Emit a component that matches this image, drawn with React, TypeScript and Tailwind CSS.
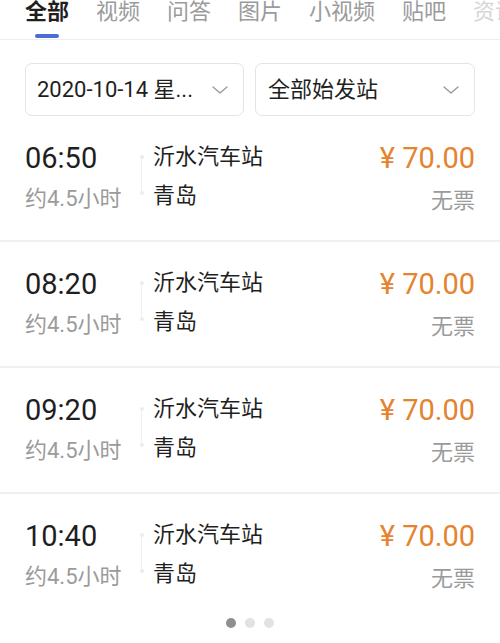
const tabs = ["全部", "视频", "问答", "图片", "小视频", "贴吧", "资讯"];

const trips = [
  { time: "06:50" },
  { time: "08:20" },
  { time: "09:20" },
  { time: "10:40" },
];

function Chevron() {
  return (
    <svg width="16" height="8" viewBox="0 0 16 8" fill="none" className="shrink-0">
      <polyline points="1,1 8,7 15,1" stroke="#9a9a9a" strokeWidth="1.4" strokeLinecap="round" strokeLinejoin="round" />
    </svg>
  );
}

function TripRow({ time, last }: { time: string; last?: boolean }) {
  return (
    <div
      className={`flex px-[25px] ${
        last ? "h-[124px]" : "h-[126px] border-b-2 border-[#f0f0f0]"
      }`}
    >
      <div className="w-[114px] shrink-0 pt-[28px]">
        <div className="text-[29px] leading-[29px] text-[#1f1f1f]">{time}</div>
        <div className="mt-[15px] text-[22px] leading-[22px] text-[#9b9b9b]">约4.5小时</div>
      </div>

      <div className="flex w-[5px] shrink-0 flex-col items-center pt-[39px]">
        <div className="h-[4px] w-[4px] rounded-full bg-[#ececec]" />
        <div className="h-[32px] w-px bg-[#f0f0f0]" />
        <div className="h-[4px] w-[4px] rounded-full bg-[#ececec]" />
      </div>

      <div className="ml-[9px] flex-1 pt-[30px] text-[22px] leading-[22px] text-[#1f1f1f]">
        <div>沂水汽车站</div>
        <div className="mt-[17px]">青岛</div>
      </div>

      <div className="flex flex-col items-end pt-[28px]">
        <div className="text-[29px] leading-[29px] text-[#e5832f]">¥ 70.00</div>
        <div className="mt-[17px] text-[22px] leading-[22px] text-[#9b9b9b]">无票</div>
      </div>
    </div>
  );
}

export default function App() {
  return (
    <div className="h-[643px] w-[500px] overflow-hidden bg-white font-['Roboto','Noto_Sans_CJK_SC',sans-serif]">
      <div className="h-[40px] overflow-hidden border-b border-[#eeeeee]">
        <div className="flex gap-[27px] whitespace-nowrap pl-[25px]">
          {tabs.map((t, i) => (
            <div key={t} className="flex shrink-0 flex-col items-center">
              <div
                className={`text-[22px] leading-[24px] ${
                  i === 0
                    ? "font-bold text-[#1f1f1f]"
                    : i === tabs.length - 1
                    ? "text-[#d6d6d6]"
                    : "text-[#9b9b9b]"
                }`}
              >
                {t}
              </div>
              {i === 0 && <div className="mt-[10px] h-[4px] w-[24px] rounded-full bg-[#4b6ed6]" />}
            </div>
          ))}
        </div>
      </div>

      <div className="mt-[23px] flex gap-[11px] px-[25px]">
        <div className="flex h-[53px] flex-1 items-center justify-between rounded-[7px] border border-[#e4e4e4] pl-[11px] pr-[15px]">
          <span className="text-[22px] leading-[22px] text-[#1f1f1f]">2020-10-14 星...</span>
          <Chevron />
        </div>
        <div className="flex h-[53px] flex-1 items-center justify-between rounded-[7px] border border-[#e4e4e4] pl-[12px] pr-[15px]">
          <span className="text-[22px] leading-[22px] text-[#1f1f1f]">全部始发站</span>
          <Chevron />
        </div>
      </div>

      <div>
        {trips.map((t, i) => (
          <TripRow key={t.time} time={t.time} last={i === trips.length - 1} />
        ))}
      </div>

      <div className="flex justify-center gap-[9px]">
        <div className="h-[10px] w-[10px] rounded-full bg-[#8f8f8f]" />
        <div className="h-[10px] w-[10px] rounded-full bg-[#e2e2e2]" />
        <div className="h-[10px] w-[10px] rounded-full bg-[#e2e2e2]" />
      </div>
    </div>
  );
}
